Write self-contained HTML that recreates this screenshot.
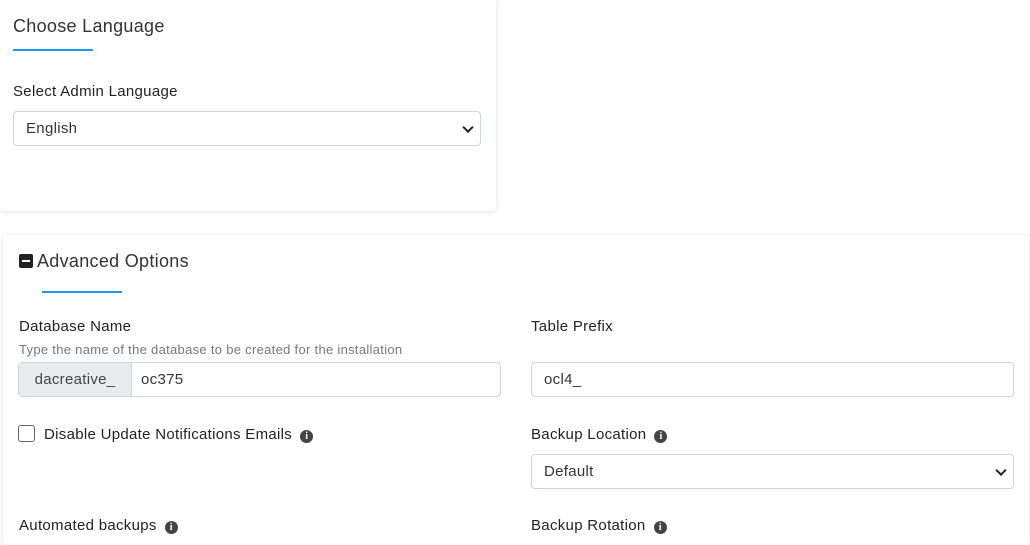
<!DOCTYPE html>
<html><head><style>
body{margin:0;background:#fff;font-family:"Liberation Sans",sans-serif;color:#222;width:1030px;height:534px;overflow:hidden;position:relative}
.card{position:absolute;background:#fff;border-radius:4px;box-shadow:0 1px 6px rgba(0,0,0,.12)}
.t{position:absolute;white-space:nowrap;letter-spacing:.3px}
.line{position:absolute;height:2px;background:#1e9be8}
.box{position:absolute;border:1px solid #ced4da;border-radius:4px;background:#fff;box-sizing:border-box;font-size:15px;letter-spacing:.3px;color:#333;padding-left:12px;display:flex;align-items:center}
.chev{position:absolute;right:8px;top:50%;width:6px;height:6px;border-right:2px solid #222;border-bottom:2px solid #222;transform:translateY(-70%) rotate(45deg)}
.i{display:inline-block;width:13px;height:13px;border-radius:50%;background:#444;color:#fff;font-size:10px;font-weight:bold;text-align:center;line-height:13px;vertical-align:0;margin-left:8px;font-family:"Liberation Serif",serif;letter-spacing:0}
</style></head><body>
<div class="card" style="left:0;top:-4px;width:496px;height:215px"></div>
<div class="t" style="left:13px;top:16px;font-size:18px;color:#333">Choose Language</div>
<div class="line" style="left:13px;top:49px;width:80px"></div>
<div class="t" style="left:13px;top:83px;font-size:15px">Select Admin Language</div>
<div class="box" style="left:13px;top:111px;width:468px;height:35px">English<span class="chev"></span></div>

<div class="card" style="left:3px;top:235px;width:1026px;height:310px"></div>
<div class="t" style="left:19px;top:251px;font-size:18px;color:#333"><span style="display:inline-block;width:14px;height:14px;background:#222;border-radius:2px;vertical-align:-1px;position:relative;margin-right:4px"><span style="position:absolute;left:3px;top:6px;width:8px;height:2px;background:#fff"></span></span>Advanced Options</div>
<div class="line" style="left:42px;top:291px;width:80px"></div>
<div class="t" style="left:19px;top:318px;font-size:15px">Database Name</div>
<div class="t" style="left:19px;top:342px;font-size:13px;color:#777">Type the name of the database to be created for the installation</div>
<div class="box" style="left:18px;top:362px;width:483px;height:35px;padding-left:0">
<div style="width:112px;height:100%;background:#e9ecef;border-right:1px solid #ced4da;display:flex;align-items:center;justify-content:center;color:#444">dacreative_</div>
<div style="padding-left:9px">oc375</div></div>
<div style="position:absolute;left:18px;top:425px;width:15px;height:15px;border:1px solid #666;border-radius:3px"></div>
<div class="t" style="left:44px;top:426px;font-size:15px">Disable Update Notifications Emails<span class="i">i</span></div>
<div class="t" style="left:19px;top:517px;font-size:15px">Automated backups<span class="i">i</span></div>

<div class="t" style="left:531px;top:318px;font-size:15px">Table Prefix</div>
<div class="box" style="left:531px;top:362px;width:483px;height:35px">ocl4_</div>
<div class="t" style="left:531px;top:426px;font-size:15px">Backup Location<span class="i">i</span></div>
<div class="box" style="left:531px;top:454px;width:483px;height:35px">Default<span class="chev"></span></div>
<div class="t" style="left:531px;top:517px;font-size:15px">Backup Rotation<span class="i">i</span></div>
</body></html>
